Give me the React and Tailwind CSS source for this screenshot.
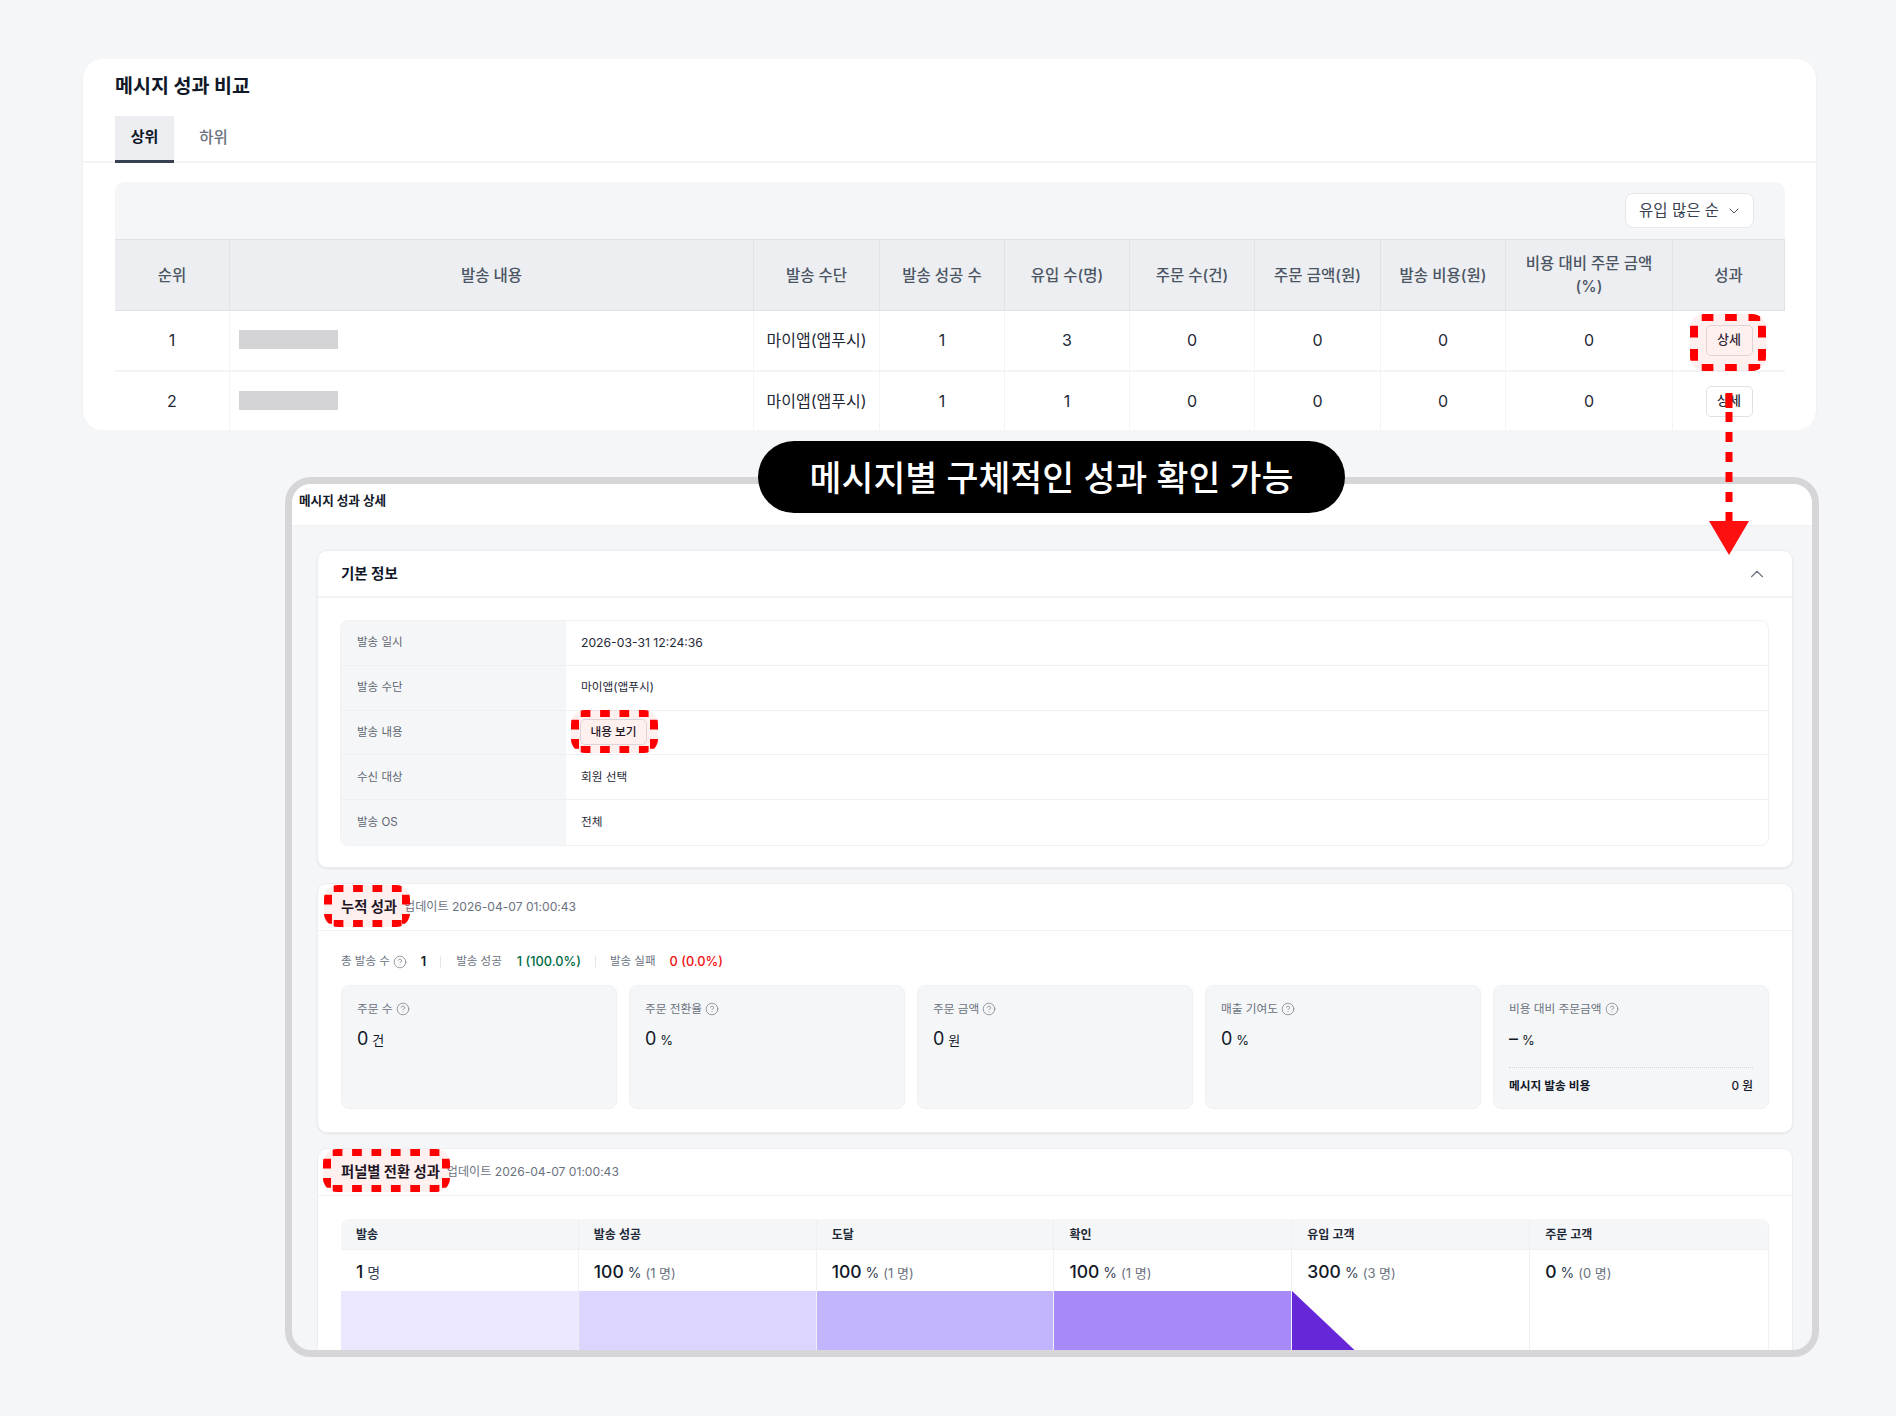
import { ChevronDown, ChevronUp, CircleHelp } from 'lucide-react';

const columns = ['순위', '발송 내용', '발송 수단', '발송 성공 수', '유입 수(명)', '주문 수(건)', '주문 금액(원)', '발송 비용(원)', '비용 대비 주문 금액 (%)', '성과'];

const rows = [
    { rank: 1, sent: 1, visits: 3 },
    { rank: 2, sent: 1, visits: 1 },
];

const infoRows = [
    { label: '발송 일시', value: '2026-03-31 12:24:36', date: true },
    { label: '발송 수단', value: '마이앱(앱푸시)' },
    { label: '발송 내용', button: '내용 보기' },
    { label: '수신 대상', value: '회원 선택' },
    { label: '발송 OS', value: '전체' },
];

const metrics = [
    { label: '주문 수', value: '0', unit: '건' },
    { label: '주문 전환율', value: '0', unit: '%' },
    { label: '주문 금액', value: '0', unit: '원' },
    { label: '매출 기여도', value: '0', unit: '%' },
    { label: '비용 대비 주문금액', value: '–', unit: '%', cost: true },
];

const funnel = [
    { label: '발송', value: '1', unit: '명', bar: 'bg-[#ebe7fe]' },
    { label: '발송 성공', value: '100', unit: '%', count: '(1 명)', bar: 'bg-[#dcd5fe]' },
    { label: '도달', value: '100', unit: '%', count: '(1 명)', bar: 'bg-[#c2b4fd]' },
    { label: '확인', value: '100', unit: '%', count: '(1 명)', bar: 'bg-[#a68afa]' },
    { label: '유입 고객', value: '300', unit: '%', count: '(3 명)', triangle: true },
    { label: '주문 고객', value: '0', unit: '%', count: '(0 명)' },
];

// red dashed highlight drawn over the screenshot, corners clipped by the svg's radius
function Mark({ className, w, h, dash = 9.7 }) {
    const line = { stroke: '#ff0000', strokeDasharray: `${dash} ${dash}`, strokeDashoffset: dash };
    return (
        <svg className={`absolute rounded-[14px] overflow-hidden ${className}`} width={w} height={h} viewBox={`0 0 ${w} ${h}`}>
            <rect width={w} height={h} fill="#ff0000" fillOpacity="0.06" />
            <line x1="0" y1="3.5" x2={w} y2="3.5" strokeWidth="7" {...line} />
            <line x1="0" y1={h - 3.5} x2={w} y2={h - 3.5} strokeWidth="7" {...line} />
            <line x1="4" y1="0" x2="4" y2={h} strokeWidth="8" {...line} />
            <line x1={w - 4} y1="0" x2={w - 4} y2={h} strokeWidth="8" {...line} />
        </svg>
    );
}

function Help() {
    return <CircleHelp size={14} strokeWidth={1.3} className="text-[#7b8088]" />;
}

function CardHead({ title, updated }) {
    return (
        <div className="h-[47px] flex items-center gap-[7px] pl-[23px] pb-[1px] border-b border-[#f1f2f4]">
            <h3 className="text-[14.3px] font-bold text-[#111827]">{title}</h3>
            {updated && <span className="mt-[2px] text-[12.1px] text-[#6b7280]">{updated}</span>}
        </div>
    );
}

export default function App() {
    return (
        <div className="relative w-[1896px] h-[1416px] overflow-hidden bg-[#f5f6f8] pt-[59px] font-['Inter','Noto_Sans_CJK_KR',sans-serif]">
            {/* 메시지 성과 비교 */}
            <section className="ml-[82px] w-[1735px] h-[371px] overflow-hidden rounded-[20px] bg-white border-l border-r border-[#f0f1f3]">
                <div className="h-[57px] pl-[32px] pt-[12px]">
                    <h2 className="text-[19.5px] leading-[30px] font-bold text-[#111827]">메시지 성과 비교</h2>
                </div>
                <div className="flex h-[47px] pl-[32px] border-b-2 border-[#f3f4f6]">
                    <div className="w-[59px] h-[47px] pb-[1px] flex items-center justify-center bg-[#eceef1] border-b-[3px] border-[#374151] text-[15px] font-bold text-[#111827]">상위</div>
                    <div className="w-[79px] h-[45px] pb-[2px] flex items-center justify-center text-[15.5px] font-medium text-[#6b7280]">하위</div>
                </div>
                <div className="ml-[32px] mt-[19px] w-[1670px]">
                    <div className="h-[57px] flex items-center justify-end pr-[31px] bg-[#f5f6f8] rounded-t-[10px]">
                        <div className="w-[129px] h-[35px] pt-[1px] flex items-center justify-between pl-[13px] pr-[11px] bg-white border border-[#e5e7eb] rounded-[8px] text-[15.5px] text-[#374151]">
                            유입 많은 순
                            <ChevronDown size={16} strokeWidth={1.5} className="text-[#4b5563]" />
                        </div>
                    </div>
                    <div className="grid grid-cols-[115px_524px_126px_125px_125px_125px_126px_125px_167px_112px]">
                        {columns.map((col) => (
                            <div key={col} className="h-[72px] px-[14px] flex items-center justify-center text-center text-[15.5px] leading-[23px] font-medium text-[#4b5563] bg-[#eceef1] border-t border-b border-r border-[#e0e2e6] last:border-r-0">
                                {col}
                            </div>
                        ))}
                        {rows.map((row) => {
                            const cell = 'h-[61px] pb-[1px] flex items-center justify-center text-[16px] text-[#1f2937] border-b-2 border-r border-[#f3f4f6]';
                            return [
                                <div key={`${row.rank}-rank`} className={cell}>{row.rank}</div>,
                                <div key={`${row.rank}-content`} className={`${cell} justify-start! pl-[9px]`}>
                                    <div className="w-[99px] h-[19px] bg-[#d4d4d6] -mt-[2px]" />
                                </div>,
                                <div key={`${row.rank}-via`} className={cell}>마이앱(앱푸시)</div>,
                                <div key={`${row.rank}-sent`} className={cell}>{row.sent}</div>,
                                <div key={`${row.rank}-visits`} className={cell}>{row.visits}</div>,
                                <div key={`${row.rank}-orders`} className={cell}>0</div>,
                                <div key={`${row.rank}-amount`} className={cell}>0</div>,
                                <div key={`${row.rank}-cost`} className={cell}>0</div>,
                                <div key={`${row.rank}-ratio`} className={cell}>0</div>,
                                <div key={`${row.rank}-detail`} className={`${cell} border-r-0!`}>
                                    <button className="w-[47px] h-[31px] bg-white border border-[#dfe1e5] rounded-[5px] text-[13px] font-medium text-[#1f2937]">상세</button>
                                </div>,
                            ];
                        })}
                    </div>
                </div>
            </section>

            {/* 메시지 성과 상세 */}
            <section className="ml-[285px] mt-[47px] w-[1534px] h-[880px] overflow-hidden rounded-[26px] border-[7px] border-[#d6d6d9] bg-[#f5f6f8]">
                <div className="h-[42px] flex items-center pl-[7px] pb-[6px] bg-white border-b border-[#f0f1f3]">
                    <h2 className="text-[12.6px] font-bold text-[#111827]">메시지 성과 상세</h2>
                </div>
                <div className="pl-[25px] pr-[19px] pt-[24px] flex flex-col gap-[15px]">
                    <div className="h-[318px] bg-white rounded-[10px] border border-[#eceef1] shadow-[0_1px_2px_rgba(0,0,0,0.08)]">
                        <div className="h-[47px] flex items-center justify-between pl-[23px] pr-[24px] border-b-2 border-[#f3f4f6]">
                            <h3 className="text-[14.5px] font-bold text-[#111827]">기본 정보</h3>
                            <ChevronUp size={22} strokeWidth={1.2} className="text-[#6b7280]" />
                        </div>
                        <div className="ml-[22px] mr-[23px] mt-[22px] rounded-[8px] overflow-hidden border border-[#f0f1f3]">
                            {infoRows.map((row) => (
                                <div key={row.label} className="h-[44.8px] flex items-center border-b border-[#eef0f2] last:border-b-0">
                                    <div className="w-[225px] h-full flex items-center pl-[16px] bg-[#f5f6f8] text-[11.5px] text-[#5f6671]">{row.label}</div>
                                    <div className={`pl-[15px] text-[#1f2937] ${row.date ? 'text-[12.2px]' : 'text-[11.7px]'}`}>
                                        {row.button ? (
                                            <button className="-ml-[1px] w-[67px] h-[26px] bg-white border border-[#dfe1e5] rounded-[5px] text-[11.7px] font-medium text-[#111827]">{row.button}</button>
                                        ) : row.value}
                                    </div>
                                </div>
                            ))}
                        </div>
                    </div>

                    <div className="h-[250px] bg-white rounded-[10px] border border-[#eceef1] shadow-[0_1px_2px_rgba(0,0,0,0.08)]">
                        <CardHead title="누적 성과" updated="업데이트 2026-04-07 01:00:43" />
                        <div className="pl-[23px] pr-[23px]">
                            <div className="mt-[21px] h-[20px] flex items-center text-[11.5px] text-[#6b7280]">
                                <span className="flex items-center gap-[3px]">총 발송 수 <Help /></span>
                                <span className="ml-[14px] text-[12.8px] font-semibold text-[#111827]">1</span>
                                <span className="ml-[14px] mr-[15px] h-[12px] w-px bg-[#e5e7eb]" />
                                <span>발송 성공</span>
                                <span className="ml-[15px] text-[12.8px] font-medium text-[#006b45]">1 (100.0%)</span>
                                <span className="ml-[14px] mr-[14px] h-[12px] w-px bg-[#e5e7eb]" />
                                <span>발송 실패</span>
                                <span className="ml-[14px] text-[12.8px] font-medium text-[#f01010]">0 (0.0%)</span>
                            </div>
                            <div className="mt-[13px] grid grid-cols-5 gap-[12px]">
                                {metrics.map((m) => (
                                    <div key={m.label} className="h-[124px] px-[15px] pt-[13px] bg-[#f5f6f8] border border-[#f0f1f3] rounded-[8px]">
                                        <div className="flex items-center gap-[3px] text-[11.7px] leading-[20px] text-[#6b7280]">
                                            {m.label}
                                            <Help />
                                        </div>
                                        <div className="mt-[7px] flex items-baseline gap-[4px] text-[#111827]">
                                            <span className="text-[18px] leading-[26px]">{m.value}</span>
                                            <span className="text-[13px]">{m.unit}</span>
                                        </div>
                                        {m.cost && (
                                            <div className="mt-[15px] pt-[8px] flex items-center justify-between border-t border-dotted border-[#d1d5db] text-[11.7px] leading-[20px] font-semibold text-[#111827]">
                                                <span>메시지 발송 비용</span>
                                                <span className="font-medium">0 원</span>
                                            </div>
                                        )}
                                    </div>
                                ))}
                            </div>
                        </div>
                    </div>

                    <div className="h-[300px] bg-white rounded-[10px] border border-[#eceef1]">
                        <CardHead title="퍼널별 전환 성과" updated="업데이트 2026-04-07 01:00:43" />
                        <div className="ml-[23px] mr-[23px] mt-[23px] grid grid-cols-6 rounded-t-[8px] overflow-hidden border-r border-[#eef0f2]">
                            {funnel.map((step) => (
                                <div key={step.label} className="border-r border-[#eef0f2] last:border-r-0">
                                    <div className="h-[31px] flex items-center pl-[15px] pt-[1px] bg-[#f5f6f8] border-b border-[#eef0f2] text-[12px] font-semibold text-[#1f2937]">{step.label}</div>
                                    <div className="h-[41px] flex items-baseline pl-[15px] pt-[11px] gap-[4px]">
                                        <span className="text-[17.5px] leading-[22px] font-medium text-[#111827]">{step.value}</span>
                                        <span className="text-[14px] text-[#374151]">{step.unit}</span>
                                        {step.count && <span className="text-[13px] text-[#6b7280]">{step.count}</span>}
                                    </div>
                                    <div className={`h-[120px] ${step.bar || ''}`}>
                                        {step.triangle && (
                                            <svg width="128" height="120" viewBox="0 0 128 120">
                                                <polygon points="0,0 127,120 0,120" fill="#6627d8" />
                                            </svg>
                                        )}
                                    </div>
                                </div>
                            ))}
                        </div>
                    </div>
                </div>
            </section>

            {/* annotations */}
            <Mark className="left-[1690px] top-[314px]" w={76} h={57} dash={11.7} />
            <Mark className="left-[571px] top-[710px]" w={87} h={43} />
            <Mark className="left-[324px] top-[885px]" w={86} h={42} />
            <Mark className="left-[323px] top-[1149px]" w={127} h={43} />

            <div className="absolute left-[758px] top-[441px] w-[587px] h-[72px] pt-[2px] flex items-center justify-center rounded-full bg-black text-[34.7px] font-medium text-white">
                메시지별 구체적인 성과 확인 가능
            </div>

            <svg className="absolute left-[1709px] top-[393px]" width="40" height="162" viewBox="0 0 40 162">
                <line x1="20" y1="0" x2="20" y2="15" stroke="#ff0000" strokeWidth="7" />
                <line x1="20" y1="19" x2="20" y2="130" stroke="#ff0000" strokeWidth="7" strokeDasharray="10 10" />
                <polygon points="0,128 40,128 20,162" fill="#ff1010" />
            </svg>
        </div>
    );
}
